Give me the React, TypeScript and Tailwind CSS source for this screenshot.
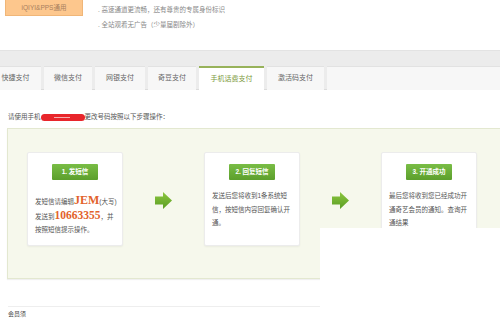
import React from "react";

// ── Small pieces ─────────────────────────────────────────────────────────────
function Tab({
  label,
  width,
  active = false,
  className = "",
}: {
  label: string;
  width: string;
  active?: boolean;
  className?: string;
}) {
  return (
    <div
      className={`${width} h-[24px] flex items-center justify-center text-[7px] ${
        active
          ? "bg-white border-t-2 border-[#97b25a] text-[#7d9a3c] h-[25px] -mb-px"
          : "bg-[#f7f7f7] text-[#666] border-t border-[#e2e2e2]"
      } ${className}`}
    >
      {label}
    </div>
  );
}

function StepButton({ label }: { label: string }) {
  return (
    <div className="mx-auto w-[46px] h-[16px] flex items-center justify-center rounded-[1px] bg-gradient-to-b from-[#79bd45] to-[#5c9f2c] text-white text-[6.5px] font-bold">
      {label}
    </div>
  );
}

function Arrow() {
  return (
    <svg width="17" height="17" viewBox="0 0 17 17">
      <defs>
        <linearGradient id="ag" x1="0" y1="0" x2="0" y2="1">
          <stop offset="0" stopColor="#8cc63f" />
          <stop offset="1" stopColor="#5a9d23" />
        </linearGradient>
      </defs>
      <path d="M0 4.5 H8 V0 L17 8.5 L8 17 V12.5 H0 Z" fill="url(#ag)" />
    </svg>
  );
}

function StepCard({
  label,
  children,
  textTop,
}: {
  label: string;
  children: React.ReactNode;
  textTop: string;
}) {
  return (
    <div className="w-[96px] h-[94px] bg-white border border-[#ececec] rounded-[2px] shadow-[0_1px_2px_rgba(0,0,0,0.05)] pt-[11px] px-[7px]">
      <StepButton label={label} />
      <div className={`${textTop} text-[6.5px] leading-[13.5px] text-[#555]`}>{children}</div>
    </div>
  );
}

// ── Page ─────────────────────────────────────────────────────────────────────
export default function App() {
  return (
    <div className="relative w-[500px] h-[318px] overflow-hidden bg-white font-['Liberation_Sans','Noto_Sans_CJK_SC',sans-serif]">
      {/* header */}
      <div className="h-[50px] flex items-start">
        <div className="ml-[5px] w-[78px] h-[16px] bg-[#fdc78d] border border-t-0 border-[#f0b678] flex items-center justify-center text-[6.5px] text-[#a8805f]">
          iQIYI&amp;PPS通用
        </div>
        <div className="ml-[15px] mt-[2px] text-[6.5px] leading-[15px] text-[#888]">
          <p>. 高速通道更流畅，还有尊贵的专属身份标识</p>
          <p>. 全站观看无广告（少量届剧除外）</p>
        </div>
      </div>

      {/* tabs */}
      <div className="h-[40px] bg-[#ececec] border-t border-[#e3e3e3] pt-[15px] border-b border-b-[#dcdcdc]">
        <div className="flex items-end gap-[3px] h-[24px]">
          <Tab label="快捷支付" width="w-[51px]" className="-ml-[10px]" />
          <Tab label="微信支付" width="w-[48px]" />
          <Tab label="网银支付" width="w-[50px]" />
          <Tab label="奇豆支付" width="w-[48px]" />
          <Tab label="手机话费支付" width="w-[65px]" active />
          <Tab label="激活码支付" width="w-[57px]" />
          <div className="flex-1 h-[24px] bg-[#f7f7f7] border-t border-[#e2e2e2]" />
        </div>
      </div>

      {/* instruction */}
      <div className="mt-[22px] ml-[8px] flex items-center text-[6.5px] text-[#555] h-[10px]">
        <span>请使用手机</span>
        <span className="relative inline-block w-[44px] h-[7px] rounded-full bg-[#e8262b]">
          <span className="absolute left-[13px] top-[3px] w-[16px] h-px bg-[#f7b0b0]" />
        </span>
        <span>更改号码按照以下步骤操作：</span>
      </div>

      {/* steps panel */}
      <div className="mt-[6px] ml-[7px] w-[500px] h-[151px] bg-[#f6f8ec] border border-[#e3e8d0] shadow-[0_1px_1px_rgba(0,0,0,0.06)] pt-[23px] pl-[19px] flex items-start">
        <StepCard label="1. 发短信" textTop="mt-[14px]">
          <p className="whitespace-nowrap">
            发短信请编辑
            <span className="font-['Liberation_Serif'] font-bold text-[12px] leading-[13px] text-[#e2622b]">JEM</span>
            (大写)
          </p>
          <p className="whitespace-nowrap">
            发送到
            <span className="font-['Liberation_Serif'] font-bold text-[11.5px] leading-[13px] text-[#e2622b]">10663355</span>
            ，并
          </p>
          <p>按照短信提示操作。</p>
        </StepCard>
        <div className="w-[81px] h-[94px] flex items-center justify-center pt-[2px]">
          <Arrow />
        </div>
        <StepCard label="2. 回复短信" textTop="mt-[9px]">
          <p>发送后您将收到1条系统短信，按短信内容回复确认开通。</p>
        </StepCard>
        <div className="w-[81px] h-[94px] flex items-center justify-center pt-[2px]">
          <Arrow />
        </div>
        <StepCard label="3. 开通成功" textTop="mt-[9px]">
          <p>最后您将收到您已经成功开通奇艺会员的通知。查询开通结果</p>
        </StepCard>
      </div>

      {/* footer */}
      <div className="mt-[27px] ml-[8px] w-[312px] border-t border-[#eeeeee]" />
      <p className="mt-[3px] ml-[8px] text-[6px] leading-[8px] text-[#444]">会员须</p>

      {/* blank area over the lower right corner */}
      <div className="absolute left-[320px] top-[228px] w-[180px] h-[90px] bg-white" />
    </div>
  );
}
